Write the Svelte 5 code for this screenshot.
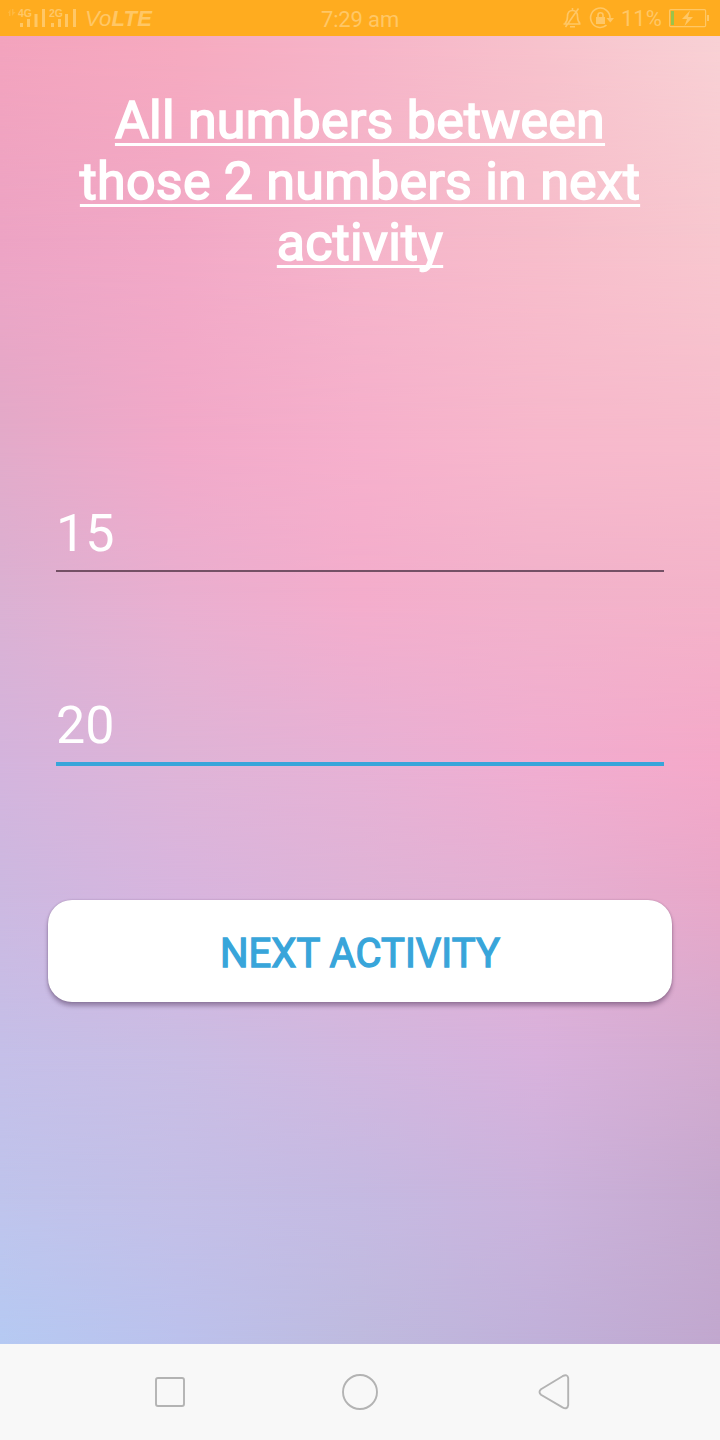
<script>
  let first = $state('15');
  let second = $state('20');

  const rows = [
    { y: 0, c: ['#f3a3bd', '#f6aabf', '#f6b4c8', '#f7c2cc', '#f8d1d5'] },
    { y: 214, c: ['#eda4c5', '#f2a9c7', '#f5b4ca', '#f7bdcb', '#f8c7cf'] },
    { y: 404, c: ['#e3aac9', '#f2a9c9', '#f6b0cc', '#f7b8cc', '#f7bccc'] },
    { y: 564, c: ['#dbb1d3', '#eaafd0', '#f4adcc', '#f2b2cb', '#f4b3c9'] },
    { y: 724, c: ['#d4b4dd', '#dfb4d7', '#e7b1d5', '#f1add0', '#f5a9c9'] },
    { y: 864, c: ['#ccb9e1', '#d8b5df', '#dfb4d7', '#e5b0d3', '#e8a8c9'] },
    { y: 1014, c: ['#c5bfe8', '#cabde4', '#d2b7df', '#d9b1dc', '#d4abcf'] },
    { y: 1164, c: ['#bfc4ec', '#c4bfe7', '#c5bae2', '#cbb3dc', '#c6a9cf'] },
    { y: 1308, c: ['#b6caf3', '#bcc2ed', '#bfbbdf', '#c1b1da', '#c2a8cf'] }
  ];
  const layers = rows.map((row, i) => {
    const next = rows[i + 1];
    const mask = next ? `linear-gradient(#000 ${row.y}px, transparent ${next.y}px)` : 'none';
    return `background-image: linear-gradient(90deg, ${row.c.join(', ')}); mask-image: ${mask}`;
  }).reverse();
</script>

<div class="phone">
  <header class="status">
    <div class="left">
      <svg width="80" height="36" viewBox="0 0 80 36" fill="#ffc766">
        <path d="M8 13l2.400-4v7H9v-3zM12 9h1.400v3h2.200L12 16z" opacity=".45" />
        <text x="18" y="16.500" class="net">4G</text>
        <text x="49" y="16.500" class="net">2G</text>
        <path d="M20 23h3v4h-3zM27 19h3v8h-3zM34.500 14h3v13h-3zM42 9h3v18h-3zM51 23h3v4h-3zM58 19h3v8h-3zM65 14h3v13h-3zM73 9h3v18h-3z" />
      </svg>
      <span class="volte">Vo<b>LTE</b></span>
    </div>
    <span class="time">7:29 am</span>
    <div class="right">
      <svg width="58" height="36" viewBox="0 0 58 36" fill="none" stroke="#ffc766" stroke-width="1.600">
        <path d="M3.500 24h17M5 23.500c2-2 2.500-4 2.500-7 0-4 2-6 5-6s5 2 5 6c0 3 .5 5 2.500 7M12.500 8v2.500M10 26.700h5M5.500 27L18.500 8.500" />
        <path d="M46.500 25.200A9.700 9.700 0 1 1 50 18" />
        <path d="M46.500 18h7.500l-3.700 4.500z" fill="#ffc766" stroke="none" />
        <path d="M36 17h9v7h-9z" fill="#ffc766" stroke="none" />
        <path d="M38 17v-1.800a2.500 2.500 0 0 1 5 0V17" />
      </svg>
      <span class="percent">11%</span>
      <svg width="45" height="36" viewBox="0 0 45 36" fill="none">
        <rect x="4.600" y="9.600" width="36" height="17" rx="1.200" stroke="#ffc766" stroke-width="1.200" />
        <path d="M6 11h3v14H6z" fill="#9bc34a" />
        <path d="M42 15h2v6h-2z" fill="#ffc766" />
        <path d="M25 10.500l-8 8.500h5l-2.500 7 8.500-9h-5z" fill="#ffc766" />
      </svg>
    </div>
  </header>

  <main>
    <div class="backdrop">
      {#each layers as style}
        <div {style}></div>
      {/each}
    </div>
    <h1>All numbers between<br />those 2 numbers in next<br />activity</h1>
    <input class="first" bind:value={first} inputmode="numeric" />
    <input class="second" bind:value={second} inputmode="numeric" />
    <button>NEXT ACTIVITY</button>
  </main>

  <nav>
    <svg width="720" height="96" viewBox="0 0 720 96" fill="none" stroke="#b3b3b3" stroke-width="1.900">
      <rect x="156" y="34" width="28" height="28" rx="2" />
      <circle cx="360" cy="48" r="17" />
      <path d="M541 45.200L562.500 32.200Q567.500 29.500 568.200 34V61Q567.500 66 562.500 63.300L541 50.800Q538 48 541 45.200Z" />
    </svg>
  </nav>
</div>

<style>
  :global(body) { margin: 0; }
  .phone {
    width: 720px;
    height: 1440px;
    display: flex;
    flex-direction: column;
    font-family: Roboto, sans-serif;
    overflow: hidden;
  }
  .status {
    height: 36px;
    background: #ffac1f;
    color: #ffc766;
    display: grid;
    grid-template-columns: 1fr auto 1fr;
    align-items: center;
    font-size: 22px;
  }
  .status svg { display: block; flex: none; }
  .left, .right { display: flex; align-items: center; }
  .right { justify-content: flex-end; padding-right: 10px; }
  .net { font: bold 10.500px "Liberation Sans", sans-serif; }
  .volte {
    font: italic 22px "Liberation Sans", sans-serif;
    letter-spacing: .2px;
    margin: 2px 0 0 5px;
  }
  .time { padding-top: 3px; line-height: 26px; letter-spacing: -.15px; }
  .percent { width: 44px; margin-left: 3px; }
  main {
    position: relative;
    height: 1308px;
    flex: none;
    display: flex;
    flex-direction: column;
    box-sizing: border-box;
    padding: 54px 48px 0;
  }
  .backdrop, .backdrop div { position: absolute; inset: 0; }
  h1, input, button { position: relative; }
  h1 {
    margin: 0;
    color: #fff;
    font-size: 52px;
    font-weight: 400;
    line-height: 61px;
    letter-spacing: .22px;
    text-align: center;
    white-space: nowrap;
    -webkit-text-stroke: 1.600px #fff;
    text-decoration: underline;
    text-decoration-thickness: 3px;
    text-underline-offset: 5px;
    text-decoration-skip-ink: none;
  }
  input {
    appearance: none;
    outline: none;
    border: 0;
    border-radius: 0;
    margin: 0 8px;
    padding: 0;
    box-sizing: border-box;
    background: transparent;
    color: #fff;
    font: 52px Roboto, sans-serif;
  }
  .first { margin-top: 224px; height: 75px; border-bottom: 2px solid #745065; }
  .second { margin-top: 118px; height: 76px; border-bottom: 4px solid #38a5da; padding-bottom: 1px; }
  button {
    margin-top: 134px;
    height: 102px;
    border: 0;
    border-radius: 24px;
    padding: 4px 0 0;
    background: #fff;
    color: #38a5da;
    font: 40px Roboto, sans-serif;
    letter-spacing: .05px;
    -webkit-text-stroke: 1.300px #38a5da;
    box-shadow: 0 4px 4px rgba(60, 35, 70, .38), 0 0 2px rgba(60, 35, 70, .3);
  }
  nav { height: 96px; background: #f8f8f8; }
  nav svg { display: block; }
</style>
